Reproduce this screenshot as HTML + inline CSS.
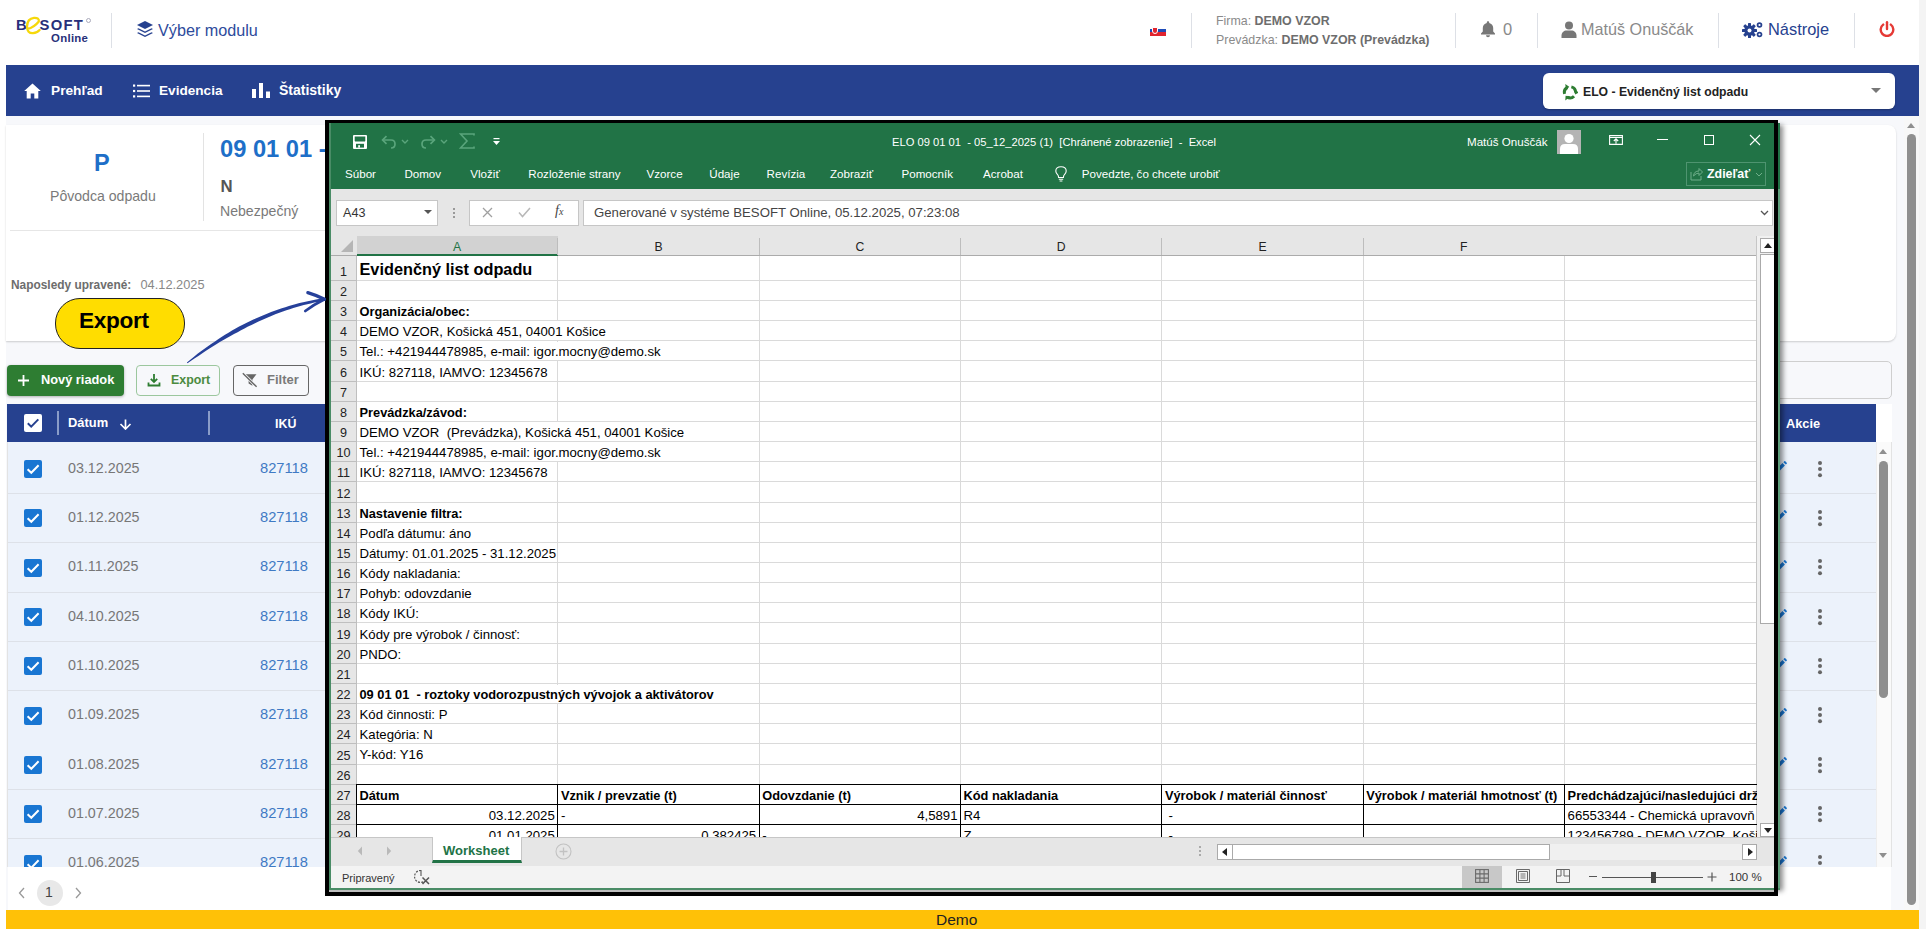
<!DOCTYPE html>
<html><head><meta charset="utf-8">
<style>
*{box-sizing:border-box;margin:0;padding:0}
html,body{width:1926px;height:929px;overflow:hidden;background:#fff;font-family:"Liberation Sans",sans-serif;position:relative}
.a{position:absolute}
.nw{white-space:nowrap}
.vdiv{position:absolute;width:1px;background:#dde0e6}
.navt{color:#fff;font-weight:700}
</style></head><body>
<!-- HEADER -->
<div class="a" style="left:0;top:0;width:1919px;height:65px;background:#fff"></div>
<!-- logo -->
<div class="a nw" style="left:16px;top:18px;font-weight:700;font-size:14.8px;color:#28307a;line-height:15px">B</div>
<div class="a nw" style="left:39.5px;top:18px;font-weight:700;font-size:14.8px;color:#28307a;line-height:15px;letter-spacing:1.3px">SOFT</div>
<svg class="a" style="left:24px;top:15px" width="18" height="21" viewBox="24 15 18 21">
<path d="M27.5 29 Q34 27.5 38.8 21.5 Q39.5 17.5 34 17.8 Q27.2 18.5 27 26.5 Q27.2 33.5 33 33.2 Q37 33 39.6 30" fill="none" stroke="#f6d80b" stroke-width="2.3" stroke-linecap="round"/>
</svg>
<div class="a" style="left:86px;top:18px;width:5px;height:5px;border:1px solid #aab;border-radius:50%"></div>
<div class="a nw" style="left:51px;top:32px;font-weight:700;font-size:11.4px;color:#28307a;line-height:12px;letter-spacing:0.3px">Online</div>
<div class="vdiv" style="left:111px;top:13px;height:35px"></div>
<!-- layers icon -->
<svg class="a" style="left:136px;top:20px" width="18" height="18" viewBox="0 0 18 18">
<path d="M9 1 L17 5 L9 9 L1 5 Z" fill="#26418f"/>
<path d="M2.5 8.2 L9 11.5 L15.5 8.2 L17 9 L9 13 L1 9 Z" fill="#26418f"/>
<path d="M2.5 12.2 L9 15.5 L15.5 12.2 L17 13 L9 17 L1 13 Z" fill="#26418f"/>
</svg>
<div class="a nw" style="left:158px;top:21px;font-size:16.2px;color:#2e4b9c;line-height:18px">Výber modulu</div>

<!-- flag -->
<div class="a" style="left:1150px;top:25px;width:16px;height:11px;background:linear-gradient(#fff 0 33%,#1e4bb8 33% 66%,#e0242f 66%)"></div>
<div class="a" style="left:1152px;top:27px;width:5.5px;height:7px;background:#e0242f;border:1px solid #fff;border-radius:0 0 3px 3px"></div>
<div class="vdiv" style="left:1191px;top:13px;height:35px"></div>
<div class="a nw" style="left:1216px;top:12px;font-size:12.4px;color:#8a8a8a;line-height:19px">Firma: <b style="color:#6d6d6d">DEMO VZOR</b><br>Prevádzka: <b style="color:#6d6d6d">DEMO VZOR (Prevádzka)</b></div>
<div class="vdiv" style="left:1455px;top:13px;height:35px"></div>
<!-- bell -->
<svg class="a" style="left:1480px;top:20px" width="16" height="18" viewBox="0 0 16 18">
<path d="M8 1.2c.7 0 1.2.5 1.2 1.1v.6c2.4.5 4 2.5 4 5v3.6l1.8 2v1H1v-1l1.8-2V7.9c0-2.5 1.6-4.5 4-5v-.6C6.8 1.7 7.300 1.200 8 1.200z" fill="#777"/>
<path d="M6 15.2h4a2 2 0 0 1-4 0z" fill="#777"/>
</svg>
<div class="a nw" style="left:1503px;top:20px;font-size:16.5px;color:#8a8a8a;line-height:18px">0</div>
<div class="vdiv" style="left:1537px;top:13px;height:35px"></div>
<!-- user -->
<svg class="a" style="left:1561px;top:21px" width="16" height="17" viewBox="0 0 16 17">
<circle cx="8" cy="4.5" r="4" fill="#777"/>
<path d="M0.5 17v-2.5c0-3 2.5-5 5-5h5c2.5 0 5 2 5 5V17z" fill="#777"/>
</svg>
<div class="a nw" style="left:1581px;top:20px;font-size:16.2px;color:#8a8a8a;line-height:18px">Matúš Onuščák</div>
<div class="vdiv" style="left:1718px;top:13px;height:35px"></div>
<!-- gears -->
<svg class="a" style="left:1742px;top:21px" width="22" height="17" viewBox="0 0 22 17">
<g fill="#26418f">
<circle cx="7.5" cy="9.5" r="5.2"/>
<rect x="6" y="2" width="3" height="15" rx="0.6"/>
<rect x="6" y="2" width="3" height="15" rx="0.6" transform="rotate(45 7.5 9.5)"/>
<rect x="6" y="2" width="3" height="15" rx="0.6" transform="rotate(90 7.5 9.5)"/>
<rect x="6" y="2" width="3" height="15" rx="0.6" transform="rotate(135 7.5 9.5)"/>
</g>
<circle cx="7.5" cy="9.5" r="2" fill="#fff"/>
<g fill="#26418f">
<circle cx="17.5" cy="4" r="2.8"/><circle cx="17.5" cy="13.5" r="2.8"/>
</g>
<circle cx="17.5" cy="4" r="1.1" fill="#fff"/><circle cx="17.5" cy="13.5" r="1.1" fill="#fff"/>
</svg>
<div class="a nw" style="left:1768px;top:20px;font-size:16.4px;color:#26418f;line-height:18px">Nástroje</div>
<div class="vdiv" style="left:1854px;top:13px;height:35px"></div>
<!-- power -->
<svg class="a" style="left:1879px;top:21px" width="16" height="16" viewBox="0 0 16 16">
<path d="M4.2 3.6A6.3 6.3 0 1 0 11.8 3.6" fill="none" stroke="#e53935" stroke-width="2.4" stroke-linecap="round"/>
<path d="M8 1.2V8" stroke="#e53935" stroke-width="2.4" stroke-linecap="round"/>
</svg>

<div id="rstrip" class="a" style="left:1919px;top:0;width:7px;height:929px;background:#f4f4f4"></div>

<!-- NAV -->
<div class="a" style="left:6px;top:65px;width:1913px;height:51px;background:#26418f"></div>
<svg class="a" style="left:24px;top:83px" width="17" height="16" viewBox="0 0 17 16">
<path d="M8.5 0.5 L16.8 8 H14.3 V15.5 H10.3 V10.5 H6.7 V15.5 H2.7 V8 H0.2 Z" fill="#fff"/>
</svg>
<div class="navt nw a" style="left:51px;top:83px;font-size:13.7px;line-height:16px">Prehľad</div>
<svg class="a" style="left:133px;top:84px" width="17" height="14" viewBox="0 0 17 14">
<g fill="#fff"><rect x="0" y="0.5" width="2.2" height="2.2"/><rect x="0" y="5.9" width="2.2" height="2.2"/><rect x="0" y="11.3" width="2.2" height="2.2"/>
<rect x="4" y="0.8" width="13" height="1.6"/><rect x="4" y="6.2" width="13" height="1.6"/><rect x="4" y="11.6" width="13" height="1.6"/></g>
</svg>
<div class="navt nw a" style="left:159px;top:83px;font-size:13.6px;line-height:16px">Evidencia</div>
<svg class="a" style="left:252px;top:83px" width="18" height="16" viewBox="0 0 18 16">
<g fill="#fff"><rect x="0" y="6" width="4" height="9"/><rect x="7" y="0" width="4" height="15"/><rect x="14" y="8.5" width="4" height="6.5"/></g>
</svg>
<div class="navt nw a" style="left:279px;top:81px;font-size:14px;line-height:18px">Štatistiky</div>
<!-- ELO select -->
<div class="a" style="left:1543px;top:73px;width:352px;height:36px;background:#fff;border-radius:6px;box-shadow:0 1px 2px rgba(0,0,0,.25)"></div>
<svg class="a" style="left:1562px;top:83.5px" width="16" height="17" viewBox="0 0 16 17"><path d="M9.35 2.87 A5.6 5.6 0 0 1 13.60 8.50" fill="none" stroke="#2e7d32" stroke-width="3"/><path d="M13.19 10.40 L17.51 8.26 L11.57 5.86Z" fill="#2e7d32"/><path d="M12.03 12.19 A5.6 5.6 0 0 1 5.03 13.05" fill="none" stroke="#2e7d32" stroke-width="3"/><path d="M3.59 11.75 L3.28 16.55 L8.33 12.61Z" fill="#2e7d32"/><path d="M2.62 9.84 A5.6 5.6 0 0 1 5.37 3.36" fill="none" stroke="#2e7d32" stroke-width="3"/><path d="M7.22 2.75 L3.21 0.09 L4.10 6.42Z" fill="#2e7d32"/></svg>
<div class="a nw" style="left:1583px;top:84.5px;font-size:12.2px;font-weight:700;color:#222;line-height:14px">ELO - Evidenčný list odpadu</div>
<div class="a" style="left:1871px;top:88px;width:0;height:0;border-left:5px solid transparent;border-right:5px solid transparent;border-top:5px solid #777"></div>

<!-- CONTENT -->
<div class="a" style="left:6px;top:116px;width:1913px;height:794px;background:#f7f8fb"></div>
<!-- card -->
<div class="a" style="left:6px;top:125px;width:1890px;height:216px;background:#fff;border-radius:0 8px 8px 0;box-shadow:0 1px 2px rgba(0,0,0,.18)"></div>
<div class="a nw" style="left:94px;top:150.5px;font-size:23.5px;font-weight:700;color:#1e6fc8;line-height:24px">P</div>
<div class="a nw" style="left:50px;top:188px;font-size:14.1px;color:#7a7a7a;line-height:16px">Pôvodca odpadu</div>
<div class="vdiv" style="left:203px;top:133px;height:88px;background:#e3e3e3"></div>
<div class="a nw" style="left:220px;top:136px;font-size:23.7px;font-weight:700;color:#1e6fc8;line-height:26px">09 01 01 - roztoky vodorozpustných vývojok a aktivátorov</div>
<div class="a nw" style="left:220.5px;top:178.5px;font-size:16.8px;font-weight:700;color:#555;line-height:16px">N</div>
<div class="a nw" style="left:220px;top:202.5px;font-size:14.1px;color:#7a7a7a;line-height:16px">Nebezpečný</div>
<div class="a" style="left:10px;top:230px;width:1000px;height:1px;background:#e6e6e6"></div>
<div class="a nw" style="left:11px;top:278px;font-size:11.9px;font-weight:700;color:#6d6d6d;line-height:14px">Naposledy upravené:</div><div class="a nw" style="left:140.5px;top:278px;font-size:12.8px;color:#888;line-height:14px">04.12.2025</div>

<!-- toolbar -->
<div class="a" style="left:7px;top:365px;width:117px;height:31px;background:#2e7d32;border-radius:4px;box-shadow:0 1px 3px rgba(0,0,0,.3)"></div>
<svg class="a" style="left:17px;top:374px" width="13" height="13" viewBox="0 0 13 13"><path d="M6.5 1V12M1 6.5H12" stroke="#fff" stroke-width="1.8"/></svg>
<div class="a nw" style="left:41px;top:373px;font-size:12.8px;font-weight:700;color:#fff;line-height:14px">Nový riadok</div>
<div class="a" style="left:136px;top:365px;width:84px;height:31px;border:1px solid #9cc79e;border-radius:4px;background:transparent"></div>
<svg class="a" style="left:147px;top:373px" width="14" height="14" viewBox="0 0 14 14"><path d="M7 1V9M3.8 5.8L7 9L10.2 5.8M1.5 9.5V12.5H12.5V9.5" fill="none" stroke="#2e7d32" stroke-width="1.8"/></svg>
<div class="a nw" style="left:171px;top:373px;font-size:12.4px;font-weight:700;color:#4c8b3f;line-height:14px">Export</div>
<div class="a" style="left:233px;top:365px;width:76px;height:31px;border:1px solid #666;border-radius:4px;background:transparent"></div>
<svg class="a" style="left:242px;top:372px" width="16" height="16" viewBox="0 0 16 16"><path d="M3.5 2.2H14.5L10.4 7.4V13.8L6.6 11.6V7.4Z" fill="#666"/><path d="M0.8 1.2L14.6 14.8" stroke="#f7f8fb" stroke-width="3"/><path d="M0.8 1.2L14.6 14.8" stroke="#666" stroke-width="1.4"/></svg>
<div class="a nw" style="left:267px;top:373px;font-size:13px;font-weight:700;color:#7a7a7a;line-height:14px">Filter</div>
<!-- right search box -->
<div class="a" style="left:1000px;top:361px;width:892px;height:38px;border:1px solid #cfcfcf;border-radius:5px;background:#f7f8fb"></div>

<!-- table -->
<div class="a" style="left:7px;top:404px;width:1885px;height:463px;background:#fff;border:1px solid #e3e3e3"></div>
<div class="a" style="left:7px;top:404px;width:1869px;height:38px;background:#26418f"></div>
<div class="a" style="left:1876px;top:404px;width:16px;height:38px;background:#fff"></div>
<div class="a" style="left:24px;top:414px;width:18px;height:18px;background:#fff;border-radius:2px"></div>
<svg class="a" style="left:24px;top:414px" width="18" height="18" viewBox="0 0 18 18"><path d="M3.8 9.3L7.2 12.6L14.3 5.4" fill="none" stroke="#26418f" stroke-width="2"/></svg>
<div class="a" style="left:57px;top:411px;width:2px;height:24px;background:#8a9cc8"></div>
<div class="a nw" style="left:68px;top:416px;font-size:12.9px;font-weight:700;color:#fff;line-height:14px">Dátum</div>
<svg class="a" style="left:119px;top:418.5px" width="13" height="11" viewBox="0 0 13 11"><path d="M6.5 0.5V10M1.5 5L6.5 10L11.5 5" fill="none" stroke="#fff" stroke-width="1.7"/></svg>
<div class="a" style="left:208px;top:411px;width:2px;height:24px;background:#8a9cc8"></div>
<div class="a nw" style="left:275px;top:417px;font-size:12.4px;font-weight:700;color:#fff;line-height:14px">IKÚ</div>
<div class="a nw" style="left:1786px;top:417px;font-size:12.8px;font-weight:700;color:#fff;line-height:14px">Akcie</div>
<div class="a" style="left:7px;top:442px;width:1869px;height:425px;overflow:hidden"><div style="position:relative;left:-7px;top:-442px"><div class="a" style="left:8px;top:442.0px;width:1868px;height:51.8px;background:#ecf2fb"></div>
<div class="a" style="left:8px;top:492.8px;width:1868px;height:1px;background:#dde1e8"></div>
<div class="a" style="left:24px;top:459.9px;width:18px;height:18px;background:#1976d2;border-radius:2px"></div>
<svg class="a" style="left:24px;top:459.9px" width="18" height="18" viewBox="0 0 18 18"><path d="M3.6 9.2L7.3 12.8L14.6 5.3" fill="none" stroke="#fff" stroke-width="2"/></svg>
<div class="a nw" style="left:68px;top:459.6px;font-size:14.3px;color:#777;line-height:16px">03.12.2025</div>
<div class="a nw" style="left:260px;top:459.6px;font-size:14.7px;color:#3f7ac4;line-height:16px">827118</div>
<svg class="a" style="left:1773px;top:461.1px" width="14" height="14" viewBox="0 0 14 14"><path d="M1 13L1.8 9.8L9.5 2.1L11.9 4.5L4.2 12.2Z" fill="#1976d2"/><path d="M10.4 1.2L11.3 0.3Q11.8 -0.2 12.3 0.3L13.7 1.7Q14.2 2.2 13.7 2.7L12.8 3.6Z" fill="#1976d2"/></svg>
<div class="a" style="left:1818px;top:460.6px;width:4px;height:4px;border-radius:50%;background:#666;box-shadow:0 6.1px 0 #666,0 12.2px 0 #666"></div>
<div class="a" style="left:8px;top:493.8px;width:1868px;height:49.3px;background:#ecf2fb"></div>
<div class="a" style="left:8px;top:542.1px;width:1868px;height:1px;background:#dde1e8"></div>
<div class="a" style="left:24px;top:509.2px;width:18px;height:18px;background:#1976d2;border-radius:2px"></div>
<svg class="a" style="left:24px;top:509.2px" width="18" height="18" viewBox="0 0 18 18"><path d="M3.6 9.2L7.3 12.8L14.6 5.3" fill="none" stroke="#fff" stroke-width="2"/></svg>
<div class="a nw" style="left:68px;top:508.9px;font-size:14.3px;color:#777;line-height:16px">01.12.2025</div>
<div class="a nw" style="left:260px;top:508.9px;font-size:14.7px;color:#3f7ac4;line-height:16px">827118</div>
<svg class="a" style="left:1773px;top:510.4px" width="14" height="14" viewBox="0 0 14 14"><path d="M1 13L1.8 9.8L9.5 2.1L11.9 4.5L4.2 12.2Z" fill="#1976d2"/><path d="M10.4 1.2L11.3 0.3Q11.8 -0.2 12.3 0.3L13.7 1.7Q14.2 2.2 13.7 2.7L12.8 3.6Z" fill="#1976d2"/></svg>
<div class="a" style="left:1818px;top:509.9px;width:4px;height:4px;border-radius:50%;background:#666;box-shadow:0 6.1px 0 #666,0 12.2px 0 #666"></div>
<div class="a" style="left:8px;top:543.1px;width:1868px;height:49.3px;background:#ecf2fb"></div>
<div class="a" style="left:8px;top:591.5px;width:1868px;height:1px;background:#dde1e8"></div>
<div class="a" style="left:24px;top:558.6px;width:18px;height:18px;background:#1976d2;border-radius:2px"></div>
<svg class="a" style="left:24px;top:558.6px" width="18" height="18" viewBox="0 0 18 18"><path d="M3.6 9.2L7.3 12.8L14.6 5.3" fill="none" stroke="#fff" stroke-width="2"/></svg>
<div class="a nw" style="left:68px;top:558.3px;font-size:14.3px;color:#777;line-height:16px">01.11.2025</div>
<div class="a nw" style="left:260px;top:558.3px;font-size:14.7px;color:#3f7ac4;line-height:16px">827118</div>
<svg class="a" style="left:1773px;top:559.8px" width="14" height="14" viewBox="0 0 14 14"><path d="M1 13L1.8 9.8L9.5 2.1L11.9 4.5L4.2 12.2Z" fill="#1976d2"/><path d="M10.4 1.2L11.3 0.3Q11.8 -0.2 12.3 0.3L13.7 1.7Q14.2 2.2 13.7 2.7L12.8 3.6Z" fill="#1976d2"/></svg>
<div class="a" style="left:1818px;top:559.3px;width:4px;height:4px;border-radius:50%;background:#666;box-shadow:0 6.1px 0 #666,0 12.2px 0 #666"></div>
<div class="a" style="left:8px;top:592.5px;width:1868px;height:49.3px;background:#ecf2fb"></div>
<div class="a" style="left:8px;top:640.8px;width:1868px;height:1px;background:#dde1e8"></div>
<div class="a" style="left:24px;top:607.9px;width:18px;height:18px;background:#1976d2;border-radius:2px"></div>
<svg class="a" style="left:24px;top:607.9px" width="18" height="18" viewBox="0 0 18 18"><path d="M3.6 9.2L7.3 12.8L14.6 5.3" fill="none" stroke="#fff" stroke-width="2"/></svg>
<div class="a nw" style="left:68px;top:607.6px;font-size:14.3px;color:#777;line-height:16px">04.10.2025</div>
<div class="a nw" style="left:260px;top:607.6px;font-size:14.7px;color:#3f7ac4;line-height:16px">827118</div>
<svg class="a" style="left:1773px;top:609.1px" width="14" height="14" viewBox="0 0 14 14"><path d="M1 13L1.8 9.8L9.5 2.1L11.9 4.5L4.2 12.2Z" fill="#1976d2"/><path d="M10.4 1.2L11.3 0.3Q11.8 -0.2 12.3 0.3L13.7 1.7Q14.2 2.2 13.7 2.7L12.8 3.6Z" fill="#1976d2"/></svg>
<div class="a" style="left:1818px;top:608.6px;width:4px;height:4px;border-radius:50%;background:#666;box-shadow:0 6.1px 0 #666,0 12.2px 0 #666"></div>
<div class="a" style="left:8px;top:641.8px;width:1868px;height:49.3px;background:#ecf2fb"></div>
<div class="a" style="left:8px;top:690.1px;width:1868px;height:1px;background:#dde1e8"></div>
<div class="a" style="left:24px;top:657.2px;width:18px;height:18px;background:#1976d2;border-radius:2px"></div>
<svg class="a" style="left:24px;top:657.2px" width="18" height="18" viewBox="0 0 18 18"><path d="M3.6 9.2L7.3 12.8L14.6 5.3" fill="none" stroke="#fff" stroke-width="2"/></svg>
<div class="a nw" style="left:68px;top:656.9px;font-size:14.3px;color:#777;line-height:16px">01.10.2025</div>
<div class="a nw" style="left:260px;top:656.9px;font-size:14.7px;color:#3f7ac4;line-height:16px">827118</div>
<svg class="a" style="left:1773px;top:658.4px" width="14" height="14" viewBox="0 0 14 14"><path d="M1 13L1.8 9.8L9.5 2.1L11.9 4.5L4.2 12.2Z" fill="#1976d2"/><path d="M10.4 1.2L11.3 0.3Q11.8 -0.2 12.3 0.3L13.7 1.7Q14.2 2.2 13.7 2.7L12.8 3.6Z" fill="#1976d2"/></svg>
<div class="a" style="left:1818px;top:657.9px;width:4px;height:4px;border-radius:50%;background:#666;box-shadow:0 6.1px 0 #666,0 12.2px 0 #666"></div>
<div class="a" style="left:8px;top:691.1px;width:1868px;height:49.3px;background:#ecf2fb"></div>
<div class="a" style="left:8px;top:739.5px;width:1868px;height:1px;background:#dde1e8"></div>
<div class="a" style="left:24px;top:706.6px;width:18px;height:18px;background:#1976d2;border-radius:2px"></div>
<svg class="a" style="left:24px;top:706.6px" width="18" height="18" viewBox="0 0 18 18"><path d="M3.6 9.2L7.3 12.8L14.6 5.3" fill="none" stroke="#fff" stroke-width="2"/></svg>
<div class="a nw" style="left:68px;top:706.2px;font-size:14.3px;color:#777;line-height:16px">01.09.2025</div>
<div class="a nw" style="left:260px;top:706.2px;font-size:14.7px;color:#3f7ac4;line-height:16px">827118</div>
<svg class="a" style="left:1773px;top:707.8px" width="14" height="14" viewBox="0 0 14 14"><path d="M1 13L1.8 9.8L9.5 2.1L11.9 4.5L4.2 12.2Z" fill="#1976d2"/><path d="M10.4 1.2L11.3 0.3Q11.8 -0.2 12.3 0.3L13.7 1.7Q14.2 2.2 13.7 2.7L12.8 3.6Z" fill="#1976d2"/></svg>
<div class="a" style="left:1818px;top:707.3px;width:4px;height:4px;border-radius:50%;background:#666;box-shadow:0 6.1px 0 #666,0 12.2px 0 #666"></div>
<div class="a" style="left:8px;top:740.4px;width:1868px;height:49.3px;background:#ecf2fb"></div>
<div class="a" style="left:8px;top:788.8px;width:1868px;height:1px;background:#dde1e8"></div>
<div class="a" style="left:24px;top:755.9px;width:18px;height:18px;background:#1976d2;border-radius:2px"></div>
<svg class="a" style="left:24px;top:755.9px" width="18" height="18" viewBox="0 0 18 18"><path d="M3.6 9.2L7.3 12.8L14.6 5.3" fill="none" stroke="#fff" stroke-width="2"/></svg>
<div class="a nw" style="left:68px;top:755.6px;font-size:14.3px;color:#777;line-height:16px">01.08.2025</div>
<div class="a nw" style="left:260px;top:755.6px;font-size:14.7px;color:#3f7ac4;line-height:16px">827118</div>
<svg class="a" style="left:1773px;top:757.1px" width="14" height="14" viewBox="0 0 14 14"><path d="M1 13L1.8 9.8L9.5 2.1L11.9 4.5L4.2 12.2Z" fill="#1976d2"/><path d="M10.4 1.2L11.3 0.3Q11.8 -0.2 12.3 0.3L13.7 1.7Q14.2 2.2 13.7 2.7L12.8 3.6Z" fill="#1976d2"/></svg>
<div class="a" style="left:1818px;top:756.6px;width:4px;height:4px;border-radius:50%;background:#666;box-shadow:0 6.1px 0 #666,0 12.2px 0 #666"></div>
<div class="a" style="left:8px;top:789.8px;width:1868px;height:49.3px;background:#ecf2fb"></div>
<div class="a" style="left:8px;top:838.1px;width:1868px;height:1px;background:#dde1e8"></div>
<div class="a" style="left:24px;top:805.2px;width:18px;height:18px;background:#1976d2;border-radius:2px"></div>
<svg class="a" style="left:24px;top:805.2px" width="18" height="18" viewBox="0 0 18 18"><path d="M3.6 9.2L7.3 12.8L14.6 5.3" fill="none" stroke="#fff" stroke-width="2"/></svg>
<div class="a nw" style="left:68px;top:804.9px;font-size:14.3px;color:#777;line-height:16px">01.07.2025</div>
<div class="a nw" style="left:260px;top:804.9px;font-size:14.7px;color:#3f7ac4;line-height:16px">827118</div>
<svg class="a" style="left:1773px;top:806.4px" width="14" height="14" viewBox="0 0 14 14"><path d="M1 13L1.8 9.8L9.5 2.1L11.9 4.5L4.2 12.2Z" fill="#1976d2"/><path d="M10.4 1.2L11.3 0.3Q11.8 -0.2 12.3 0.3L13.7 1.7Q14.2 2.2 13.7 2.7L12.8 3.6Z" fill="#1976d2"/></svg>
<div class="a" style="left:1818px;top:805.9px;width:4px;height:4px;border-radius:50%;background:#666;box-shadow:0 6.1px 0 #666,0 12.2px 0 #666"></div>
<div class="a" style="left:8px;top:839.1px;width:1868px;height:49.3px;background:#ecf2fb"></div>
<div class="a" style="left:8px;top:887.4px;width:1868px;height:1px;background:#dde1e8"></div>
<div class="a" style="left:24px;top:854.5px;width:18px;height:18px;background:#1976d2;border-radius:2px"></div>
<svg class="a" style="left:24px;top:854.5px" width="18" height="18" viewBox="0 0 18 18"><path d="M3.6 9.2L7.3 12.8L14.6 5.3" fill="none" stroke="#fff" stroke-width="2"/></svg>
<div class="a nw" style="left:68px;top:854.2px;font-size:14.3px;color:#777;line-height:16px">01.06.2025</div>
<div class="a nw" style="left:260px;top:854.2px;font-size:14.7px;color:#3f7ac4;line-height:16px">827118</div>
<svg class="a" style="left:1773px;top:855.7px" width="14" height="14" viewBox="0 0 14 14"><path d="M1 13L1.8 9.8L9.5 2.1L11.9 4.5L4.2 12.2Z" fill="#1976d2"/><path d="M10.4 1.2L11.3 0.3Q11.8 -0.2 12.3 0.3L13.7 1.7Q14.2 2.2 13.7 2.7L12.8 3.6Z" fill="#1976d2"/></svg>
<div class="a" style="left:1818px;top:855.2px;width:4px;height:4px;border-radius:50%;background:#666;box-shadow:0 6.1px 0 #666,0 12.2px 0 #666"></div></div></div>
<!-- table scrollbar -->
<div class="a" style="left:1876px;top:442px;width:15px;height:425px;background:#fafafa;border-left:1px solid #eee"></div>
<div class="a" style="left:1879px;top:449px;width:0;height:0;border-left:4.5px solid transparent;border-right:4.5px solid transparent;border-bottom:5px solid #8f8f8f"></div>
<div class="a" style="left:1879px;top:461px;width:9px;height:237px;background:#8f8f8f;border-radius:5px"></div>
<div class="a" style="left:1879px;top:853px;width:0;height:0;border-left:4.5px solid transparent;border-right:4.5px solid transparent;border-top:5px solid #8f8f8f"></div>
<!-- pagination -->
<div class="a" style="left:8px;top:867px;width:1883px;height:43px;background:#fff"></div>
<svg class="a" style="left:18px;top:887px" width="8" height="12" viewBox="0 0 8 12"><path d="M6 1L1.5 6L6 11" fill="none" stroke="#999" stroke-width="1.3"/></svg>
<div class="a" style="left:37px;top:880px;width:26px;height:26px;border-radius:50%;background:#e8e8e8"></div>
<div class="a nw" style="left:45px;top:885px;font-size:14px;color:#444;line-height:14px">1</div>
<svg class="a" style="left:74px;top:887px" width="8" height="12" viewBox="0 0 8 12"><path d="M2 1L6.5 6L2 11" fill="none" stroke="#999" stroke-width="1.3"/></svg>
<!-- page scrollbar -->
<div class="a" style="left:1904px;top:116px;width:15px;height:794px;background:#f8f8f8"></div>
<div class="a" style="left:1907px;top:123px;width:0;height:0;border-left:4.5px solid transparent;border-right:4.5px solid transparent;border-bottom:5px solid #8f8f8f"></div>
<div class="a" style="left:1907px;top:134px;width:9px;height:771px;background:#8f8f8f;border-radius:5px"></div>
<!-- demo bar -->
<div class="a" style="left:6px;top:910px;width:1913px;height:19px;background:#ffc107"></div>
<div class="a nw" style="left:936px;top:912px;font-size:15.5px;color:#222;line-height:16px">Demo</div>

<div class="a" style="left:329px;top:123px;width:1451px;height:766px;box-shadow:3px 2px 5px rgba(0,0,0,.45);background:#5f9f7c"></div>
<div class="a" style="left:329px;top:123px;width:1451px;height:66px;background:#217346"></div>
<div class="a" style="left:329px;top:189px;width:1449px;height:47px;background:#e6e6e6;border-left:1.5px solid #4a8c66"></div>
<svg class="a" style="left:352px;top:134px" width="16" height="16" viewBox="0 0 16 16">
<rect x="1" y="1" width="14" height="14" rx="1" fill="#fff"/>
<path d="M2.7 2.5H13.3V6.4Q13.3 7.6 12.1 7.6H3.9Q2.7 7.6 2.7 6.4Z" fill="#217346"/>
<rect x="4" y="9.8" width="8" height="3.8" fill="#217346"/>
<rect x="6.2" y="11.2" width="1.8" height="2.4" fill="#fff"/>
</svg>
<svg class="a" style="left:381px;top:134px" width="16" height="16" viewBox="0 0 16 16">
<path d="M2 6H10Q14 6 14 10Q14 14 10 14" fill="none" stroke="#5aa57c" stroke-width="1.7"/>
<path d="M5.5 2.2L1.6 6L5.5 9.8" fill="none" stroke="#5aa57c" stroke-width="1.7"/>
</svg>
<svg class="a" style="left:401px;top:139px" width="8" height="5" viewBox="0 0 8 5"><path d="M1 1L4 4L7 1" fill="none" stroke="#5aa57c" stroke-width="1.4"/></svg>
<svg class="a" style="left:420px;top:134px" width="16" height="16" viewBox="0 0 16 16">
<path d="M14 6H6Q2 6 2 10Q2 14 6 14" fill="none" stroke="#5aa57c" stroke-width="1.7"/>
<path d="M10.5 2.2L14.4 6L10.5 9.8" fill="none" stroke="#5aa57c" stroke-width="1.7"/>
</svg>
<svg class="a" style="left:440px;top:139px" width="8" height="5" viewBox="0 0 8 5"><path d="M1 1L4 4L7 1" fill="none" stroke="#5aa57c" stroke-width="1.4"/></svg>
<svg class="a" style="left:459px;top:133px" width="16" height="16" viewBox="0 0 16 16"><path d="M15 2.5V1H1.5L8 8L1.5 15H15V13.5" fill="none" stroke="#5aa57c" stroke-width="1.6"/></svg>
<svg class="a" style="left:493px;top:138px" width="7" height="8" viewBox="0 0 7 8"><rect x="0.5" y="0" width="6" height="1.2" fill="#fff"/><path d="M0 3H7L3.5 7Z" fill="#fff"/></svg>
<div class="a nw" style="left:892px;top:135px;font-size:11.2px;color:#fff;line-height:14px">ELO 09 01 01&nbsp; - 05_12_2025 (1)&nbsp; [Chránené zobrazenie]&nbsp; -&nbsp; Excel</div>
<div class="a nw" style="left:1467px;top:135px;font-size:11.6px;color:#fff;line-height:14px">Matúš Onuščák</div>
<svg class="a" style="left:1557px;top:130px" width="24" height="24" viewBox="0 0 24 24">
<rect width="24" height="24" fill="#b4b4b4"/><circle cx="12" cy="8.5" r="4.6" fill="#fff"/><path d="M3 24V19Q3 14 8 14H16Q21 14 21 19V24Z" fill="#fff"/>
</svg>
<svg class="a" style="left:1609px;top:135px" width="14" height="10" viewBox="0 0 14 10">
<path d="M0.6 0.6H13.4V9.4H0.6Z" fill="none" stroke="#fff" stroke-width="1.1"/><path d="M0.6 2.5H13.4" stroke="#fff" stroke-width="1"/>
<path d="M7 8.8V4M4.8 6L7 3.8L9.2 6" fill="none" stroke="#fff" stroke-width="1.1"/>
</svg>
<div class="a" style="left:1657px;top:139px;width:11px;height:1px;background:#fff"></div>
<div class="a" style="left:1704px;top:135px;width:10px;height:10px;border:1px solid #fff"></div>
<svg class="a" style="left:1749px;top:134px" width="12" height="12" viewBox="0 0 12 12"><path d="M1 1L11 11M11 1L1 11" stroke="#fff" stroke-width="1.1"/></svg>
<div class="a nw" style="left:345px;top:167px;font-size:11.6px;color:#fff;line-height:14px">Súbor</div>
<div class="a nw" style="left:404.4px;top:167px;font-size:11.6px;color:#fff;line-height:14px">Domov</div>
<div class="a nw" style="left:470.3px;top:167px;font-size:11.6px;color:#fff;line-height:14px">Vložiť</div>
<div class="a nw" style="left:528.3px;top:167px;font-size:11.6px;color:#fff;line-height:14px">Rozloženie strany</div>
<div class="a nw" style="left:646.5px;top:167px;font-size:11.6px;color:#fff;line-height:14px">Vzorce</div>
<div class="a nw" style="left:709.3px;top:167px;font-size:11.6px;color:#fff;line-height:14px">Údaje</div>
<div class="a nw" style="left:766.6px;top:167px;font-size:11.6px;color:#fff;line-height:14px">Revízia</div>
<div class="a nw" style="left:830px;top:167px;font-size:11.6px;color:#fff;line-height:14px">Zobraziť</div>
<div class="a nw" style="left:901.5px;top:167px;font-size:11.6px;color:#fff;line-height:14px">Pomocník</div>
<div class="a nw" style="left:983px;top:167px;font-size:11.6px;color:#fff;line-height:14px">Acrobat</div>
<div class="a nw" style="left:1081.8px;top:167px;font-size:11.6px;color:#fff;line-height:14px">Povedzte, čo chcete urobiť</div>
<svg class="a" style="left:1055px;top:166px" width="12" height="16" viewBox="0 0 12 16">
<path d="M3.6 11.5Q3.6 9.6 2.2 8.2Q0.8 6.6 0.8 5Q0.8 0.8 6 0.8Q11.2 0.8 11.2 5Q11.2 6.6 9.8 8.2Q8.4 9.6 8.4 11.5Z" fill="none" stroke="#fff" stroke-width="1.1"/>
<path d="M3.8 13.2H8.2M4.6 15H7.4" stroke="#fff" stroke-width="1.1"/>
</svg>
<div class="a" style="left:1686px;top:162px;width:80px;height:24px;border:1px solid #4f9470"></div>
<svg class="a" style="left:1690px;top:166px" width="13" height="15" viewBox="0 0 13 15">
<path d="M1 6V14H11V10" fill="none" stroke="#6fae8a" stroke-width="1"/><path d="M3.5 10Q4 5 9 5V2.5L12.5 6L9 9.5V7Q6 7 3.5 10Z" fill="none" stroke="#6fae8a" stroke-width="1"/>
</svg>
<div class="a nw" style="left:1707px;top:167px;font-size:12.4px;font-weight:700;color:#fff;line-height:14px">Zdieľať</div>
<svg class="a" style="left:1755px;top:172px" width="8" height="5" viewBox="0 0 8 5"><path d="M1 1L4 4L7 1" fill="none" stroke="#6fae8a" stroke-width="1"/></svg>
<div class="a" style="left:336px;top:200px;width:102px;height:26px;background:#fff;border:1px solid #c6c6c6"></div>
<div class="a nw" style="left:343px;top:206px;font-size:12.6px;color:#333;line-height:14px">A43</div>
<div class="a" style="left:424px;top:210px;width:0;height:0;border-left:4px solid transparent;border-right:4px solid transparent;border-top:4.5px solid #555"></div>
<div class="a" style="left:453px;top:208px;width:2px;height:2px;background:#999;box-shadow:0 4px 0 #999,0 8px 0 #999"></div>
<div class="a" style="left:469px;top:200px;width:110px;height:26px;background:#fff;border:1px solid #c6c6c6"></div>
<svg class="a" style="left:482px;top:207px" width="11" height="11" viewBox="0 0 11 11"><path d="M1 1L10 10M10 1L1 10" stroke="#a0a0a0" stroke-width="1.3"/></svg>
<svg class="a" style="left:518px;top:207px" width="13" height="11" viewBox="0 0 13 11"><path d="M1 5.5L4.5 9.5L12 1" fill="none" stroke="#b8b8b8" stroke-width="1.5"/></svg>
<div class="a nw" style="left:555px;top:203px;font-size:14px;font-style:italic;font-family:'Liberation Serif',serif;color:#444;line-height:16px">f<span style="font-size:10px">x</span></div>
<div class="a" style="left:583px;top:200px;width:1190px;height:26px;background:#fff;border:1px solid #c6c6c6"></div>
<div class="a nw" style="left:594px;top:205px;font-size:13.2px;color:#444;line-height:16px">Generované v systéme BESOFT Online, 05.12.2025, 07:23:08</div>
<svg class="a" style="left:1760px;top:210px" width="9" height="6" viewBox="0 0 9 6"><path d="M1 1L4.5 4.5L8 1" fill="none" stroke="#555" stroke-width="1.3"/></svg>
<div class="a" style="left:329px;top:236px;width:1445px;height:601px;background:#fff"></div>
<div class="a" style="left:331px;top:236px;width:1426px;height:19.5px;background:#e6e6e6;border-bottom:1px solid #ababab"></div>
<div class="a" style="left:331px;top:255.5px;width:25.5px;height:582px;background:#e6e6e6;border-right:1px solid #bfbfbf"></div>
<svg class="a" style="left:341px;top:240px" width="12" height="12" viewBox="0 0 12 12"><path d="M12 0V12H0Z" fill="#b5b5b5"/></svg>
<div class="a" style="left:356.5px;top:236px;width:201px;height:19.5px;background:#d2d2d2;border-bottom:2px solid #217346"></div>
<div class="a" style="left:356.5px;top:240px;width:201.3px;text-align:center;font-size:12.2px;color:#217346;line-height:14px">A</div>
<div class="a" style="left:557.9px;top:240px;width:201.3px;text-align:center;font-size:12.2px;color:#222;line-height:14px">B</div>
<div class="a" style="left:557.4px;top:238px;width:1px;height:17px;background:#bdbdbd"></div>
<div class="a" style="left:759.2px;top:240px;width:201.3px;text-align:center;font-size:12.2px;color:#222;line-height:14px">C</div>
<div class="a" style="left:758.7px;top:238px;width:1px;height:17px;background:#bdbdbd"></div>
<div class="a" style="left:960.5px;top:240px;width:201.3px;text-align:center;font-size:12.2px;color:#222;line-height:14px">D</div>
<div class="a" style="left:960.0px;top:238px;width:1px;height:17px;background:#bdbdbd"></div>
<div class="a" style="left:1161.9px;top:240px;width:201.3px;text-align:center;font-size:12.2px;color:#222;line-height:14px">E</div>
<div class="a" style="left:1161.4px;top:238px;width:1px;height:17px;background:#bdbdbd"></div>
<div class="a" style="left:1363.2px;top:240px;width:201.3px;text-align:center;font-size:12.2px;color:#222;line-height:14px">F</div>
<div class="a" style="left:1362.8px;top:238px;width:1px;height:17px;background:#bdbdbd"></div>
<div class="a" style="left:557.4px;top:255.5px;width:1px;height:582px;background:#dadada"></div>
<div class="a" style="left:758.7px;top:255.5px;width:1px;height:582px;background:#dadada"></div>
<div class="a" style="left:960.0px;top:255.5px;width:1px;height:582px;background:#dadada"></div>
<div class="a" style="left:1161.4px;top:255.5px;width:1px;height:582px;background:#dadada"></div>
<div class="a" style="left:1362.8px;top:255.5px;width:1px;height:582px;background:#dadada"></div>
<div class="a" style="left:1564.1px;top:255.5px;width:1px;height:582px;background:#dadada"></div>
<div class="a" style="left:331px;top:279.8px;width:25.5px;height:1px;background:#bfbfbf"></div>
<div class="a" style="left:356.5px;top:279.8px;width:1400px;height:1px;background:#dadada"></div>
<div class="a" style="left:331px;top:300.0px;width:25.5px;height:1px;background:#bfbfbf"></div>
<div class="a" style="left:356.5px;top:300.0px;width:1400px;height:1px;background:#dadada"></div>
<div class="a" style="left:331px;top:320.1px;width:25.5px;height:1px;background:#bfbfbf"></div>
<div class="a" style="left:356.5px;top:320.1px;width:1400px;height:1px;background:#dadada"></div>
<div class="a" style="left:331px;top:340.3px;width:25.5px;height:1px;background:#bfbfbf"></div>
<div class="a" style="left:356.5px;top:340.3px;width:1400px;height:1px;background:#dadada"></div>
<div class="a" style="left:331px;top:360.4px;width:25.5px;height:1px;background:#bfbfbf"></div>
<div class="a" style="left:356.5px;top:360.4px;width:1400px;height:1px;background:#dadada"></div>
<div class="a" style="left:331px;top:380.6px;width:25.5px;height:1px;background:#bfbfbf"></div>
<div class="a" style="left:356.5px;top:380.6px;width:1400px;height:1px;background:#dadada"></div>
<div class="a" style="left:331px;top:400.7px;width:25.5px;height:1px;background:#bfbfbf"></div>
<div class="a" style="left:356.5px;top:400.7px;width:1400px;height:1px;background:#dadada"></div>
<div class="a" style="left:331px;top:420.9px;width:25.5px;height:1px;background:#bfbfbf"></div>
<div class="a" style="left:356.5px;top:420.9px;width:1400px;height:1px;background:#dadada"></div>
<div class="a" style="left:331px;top:441.0px;width:25.5px;height:1px;background:#bfbfbf"></div>
<div class="a" style="left:356.5px;top:441.0px;width:1400px;height:1px;background:#dadada"></div>
<div class="a" style="left:331px;top:461.2px;width:25.5px;height:1px;background:#bfbfbf"></div>
<div class="a" style="left:356.5px;top:461.2px;width:1400px;height:1px;background:#dadada"></div>
<div class="a" style="left:331px;top:481.3px;width:25.5px;height:1px;background:#bfbfbf"></div>
<div class="a" style="left:356.5px;top:481.3px;width:1400px;height:1px;background:#dadada"></div>
<div class="a" style="left:331px;top:501.5px;width:25.5px;height:1px;background:#bfbfbf"></div>
<div class="a" style="left:356.5px;top:501.5px;width:1400px;height:1px;background:#dadada"></div>
<div class="a" style="left:331px;top:521.6px;width:25.5px;height:1px;background:#bfbfbf"></div>
<div class="a" style="left:356.5px;top:521.6px;width:1400px;height:1px;background:#dadada"></div>
<div class="a" style="left:331px;top:541.8px;width:25.5px;height:1px;background:#bfbfbf"></div>
<div class="a" style="left:356.5px;top:541.8px;width:1400px;height:1px;background:#dadada"></div>
<div class="a" style="left:331px;top:562.0px;width:25.5px;height:1px;background:#bfbfbf"></div>
<div class="a" style="left:356.5px;top:562.0px;width:1400px;height:1px;background:#dadada"></div>
<div class="a" style="left:331px;top:582.1px;width:25.5px;height:1px;background:#bfbfbf"></div>
<div class="a" style="left:356.5px;top:582.1px;width:1400px;height:1px;background:#dadada"></div>
<div class="a" style="left:331px;top:602.3px;width:25.5px;height:1px;background:#bfbfbf"></div>
<div class="a" style="left:356.5px;top:602.3px;width:1400px;height:1px;background:#dadada"></div>
<div class="a" style="left:331px;top:622.4px;width:25.5px;height:1px;background:#bfbfbf"></div>
<div class="a" style="left:356.5px;top:622.4px;width:1400px;height:1px;background:#dadada"></div>
<div class="a" style="left:331px;top:642.6px;width:25.5px;height:1px;background:#bfbfbf"></div>
<div class="a" style="left:356.5px;top:642.6px;width:1400px;height:1px;background:#dadada"></div>
<div class="a" style="left:331px;top:662.7px;width:25.5px;height:1px;background:#bfbfbf"></div>
<div class="a" style="left:356.5px;top:662.7px;width:1400px;height:1px;background:#dadada"></div>
<div class="a" style="left:331px;top:682.9px;width:25.5px;height:1px;background:#bfbfbf"></div>
<div class="a" style="left:356.5px;top:682.9px;width:1400px;height:1px;background:#dadada"></div>
<div class="a" style="left:331px;top:703.0px;width:25.5px;height:1px;background:#bfbfbf"></div>
<div class="a" style="left:356.5px;top:703.0px;width:1400px;height:1px;background:#dadada"></div>
<div class="a" style="left:331px;top:723.2px;width:25.5px;height:1px;background:#bfbfbf"></div>
<div class="a" style="left:356.5px;top:723.2px;width:1400px;height:1px;background:#dadada"></div>
<div class="a" style="left:331px;top:743.3px;width:25.5px;height:1px;background:#bfbfbf"></div>
<div class="a" style="left:356.5px;top:743.3px;width:1400px;height:1px;background:#dadada"></div>
<div class="a" style="left:331px;top:763.5px;width:25.5px;height:1px;background:#bfbfbf"></div>
<div class="a" style="left:356.5px;top:763.5px;width:1400px;height:1px;background:#dadada"></div>
<div class="a" style="left:331px;top:783.7px;width:25.5px;height:1px;background:#bfbfbf"></div>
<div class="a" style="left:356.5px;top:783.7px;width:1400px;height:1px;background:#dadada"></div>
<div class="a" style="left:331px;top:803.8px;width:25.5px;height:1px;background:#bfbfbf"></div>
<div class="a" style="left:356.5px;top:803.8px;width:1400px;height:1px;background:#dadada"></div>
<div class="a" style="left:331px;top:824.0px;width:25.5px;height:1px;background:#bfbfbf"></div>
<div class="a" style="left:356.5px;top:824.0px;width:1400px;height:1px;background:#dadada"></div>
<div class="a" style="left:331px;top:844.1px;width:25.5px;height:1px;background:#bfbfbf"></div>
<div class="a" style="left:356.5px;top:844.1px;width:1400px;height:1px;background:#dadada"></div>
<div class="a" style="left:1756px;top:236px;width:1px;height:601px;background:#c6c6c6"></div>
<div class="a" style="left:331px;top:263.8px;width:25px;text-align:center;font-size:12.6px;color:#222;line-height:16px">1</div>
<div class="a" style="left:331px;top:284.0px;width:25px;text-align:center;font-size:12.6px;color:#222;line-height:16px">2</div>
<div class="a" style="left:331px;top:304.1px;width:25px;text-align:center;font-size:12.6px;color:#222;line-height:16px">3</div>
<div class="a" style="left:331px;top:324.3px;width:25px;text-align:center;font-size:12.6px;color:#222;line-height:16px">4</div>
<div class="a" style="left:331px;top:344.4px;width:25px;text-align:center;font-size:12.6px;color:#222;line-height:16px">5</div>
<div class="a" style="left:331px;top:364.6px;width:25px;text-align:center;font-size:12.6px;color:#222;line-height:16px">6</div>
<div class="a" style="left:331px;top:384.7px;width:25px;text-align:center;font-size:12.6px;color:#222;line-height:16px">7</div>
<div class="a" style="left:331px;top:404.9px;width:25px;text-align:center;font-size:12.6px;color:#222;line-height:16px">8</div>
<div class="a" style="left:331px;top:425.0px;width:25px;text-align:center;font-size:12.6px;color:#222;line-height:16px">9</div>
<div class="a" style="left:331px;top:445.2px;width:25px;text-align:center;font-size:12.6px;color:#222;line-height:16px">10</div>
<div class="a" style="left:331px;top:465.3px;width:25px;text-align:center;font-size:12.6px;color:#222;line-height:16px">11</div>
<div class="a" style="left:331px;top:485.5px;width:25px;text-align:center;font-size:12.6px;color:#222;line-height:16px">12</div>
<div class="a" style="left:331px;top:505.6px;width:25px;text-align:center;font-size:12.6px;color:#222;line-height:16px">13</div>
<div class="a" style="left:331px;top:525.8px;width:25px;text-align:center;font-size:12.6px;color:#222;line-height:16px">14</div>
<div class="a" style="left:331px;top:546.0px;width:25px;text-align:center;font-size:12.6px;color:#222;line-height:16px">15</div>
<div class="a" style="left:331px;top:566.1px;width:25px;text-align:center;font-size:12.6px;color:#222;line-height:16px">16</div>
<div class="a" style="left:331px;top:586.3px;width:25px;text-align:center;font-size:12.6px;color:#222;line-height:16px">17</div>
<div class="a" style="left:331px;top:606.4px;width:25px;text-align:center;font-size:12.6px;color:#222;line-height:16px">18</div>
<div class="a" style="left:331px;top:626.6px;width:25px;text-align:center;font-size:12.6px;color:#222;line-height:16px">19</div>
<div class="a" style="left:331px;top:646.7px;width:25px;text-align:center;font-size:12.6px;color:#222;line-height:16px">20</div>
<div class="a" style="left:331px;top:666.9px;width:25px;text-align:center;font-size:12.6px;color:#222;line-height:16px">21</div>
<div class="a" style="left:331px;top:687.0px;width:25px;text-align:center;font-size:12.6px;color:#222;line-height:16px">22</div>
<div class="a" style="left:331px;top:707.2px;width:25px;text-align:center;font-size:12.6px;color:#222;line-height:16px">23</div>
<div class="a" style="left:331px;top:727.3px;width:25px;text-align:center;font-size:12.6px;color:#222;line-height:16px">24</div>
<div class="a" style="left:331px;top:747.5px;width:25px;text-align:center;font-size:12.6px;color:#222;line-height:16px">25</div>
<div class="a" style="left:331px;top:767.7px;width:25px;text-align:center;font-size:12.6px;color:#222;line-height:16px">26</div>
<div class="a" style="left:331px;top:787.8px;width:25px;text-align:center;font-size:12.6px;color:#222;line-height:16px">27</div>
<div class="a" style="left:331px;top:808.0px;width:25px;text-align:center;font-size:12.6px;color:#222;line-height:16px">28</div>
<div class="a" style="left:331px;top:828.1px;width:25px;text-align:center;font-size:12.6px;color:#222;line-height:16px">29</div>
<div class="a nw" style="left:359.5px;top:258.00px;padding:3.85px 0 0.8px 0;font-size:16.3px;font-weight:700;color:#000;line-height:14px;background:#fff">Evidenčný list odpadu</div>
<div class="a nw" style="left:359.5px;top:301.64px;padding:3.85px 0 0.8px 0;font-size:12.8px;font-weight:700;color:#000;line-height:14px;background:#fff">Organizácia/obec:</div>
<div class="a nw" style="left:359.5px;top:321.41px;padding:3.85px 0 0.8px 0;font-size:13.2px;color:#000;line-height:14px;background:#fff">DEMO VZOR, Košická 451, 04001 Košice</div>
<div class="a nw" style="left:359.5px;top:341.57px;padding:3.85px 0 0.8px 0;font-size:13.2px;color:#000;line-height:14px;background:#fff">Tel.: +421944478985, e-mail: igor.mocny@demo.sk</div>
<div class="a nw" style="left:359.5px;top:361.72px;padding:3.85px 0 0.8px 0;font-size:13.2px;color:#000;line-height:14px;background:#fff">IKÚ: 827118, IAMVO: 12345678</div>
<div class="a nw" style="left:359.5px;top:402.41px;padding:3.85px 0 0.8px 0;font-size:12.8px;font-weight:700;color:#000;line-height:14px;background:#fff">Prevádzka/závod:</div>
<div class="a nw" style="left:359.5px;top:422.18px;padding:3.85px 0 0.8px 0;font-size:13.2px;color:#000;line-height:14px;background:#fff">DEMO VZOR&nbsp; (Prevádzka), Košická 451, 04001 Košice</div>
<div class="a nw" style="left:359.5px;top:442.34px;padding:3.85px 0 0.8px 0;font-size:13.2px;color:#000;line-height:14px;background:#fff">Tel.: +421944478985, e-mail: igor.mocny@demo.sk</div>
<div class="a nw" style="left:359.5px;top:462.49px;padding:3.85px 0 0.8px 0;font-size:13.2px;color:#000;line-height:14px;background:#fff">IKÚ: 827118, IAMVO: 12345678</div>
<div class="a nw" style="left:359.5px;top:503.18px;padding:3.85px 0 0.8px 0;font-size:12.8px;font-weight:700;color:#000;line-height:14px;background:#fff">Nastavenie filtra:</div>
<div class="a nw" style="left:359.5px;top:522.95px;padding:3.85px 0 0.8px 0;font-size:13.2px;color:#000;line-height:14px;background:#fff">Podľa dátumu: áno</div>
<div class="a nw" style="left:359.5px;top:543.11px;padding:3.85px 0 0.8px 0;font-size:13.2px;color:#000;line-height:14px;background:#fff">Dátumy: 01.01.2025 - 31.12.2025</div>
<div class="a nw" style="left:359.5px;top:563.26px;padding:3.85px 0 0.8px 0;font-size:13.2px;color:#000;line-height:14px;background:#fff">Kódy nakladania:</div>
<div class="a nw" style="left:359.5px;top:583.41px;padding:3.85px 0 0.8px 0;font-size:13.2px;color:#000;line-height:14px;background:#fff">Pohyb: odovzdanie</div>
<div class="a nw" style="left:359.5px;top:603.57px;padding:3.85px 0 0.8px 0;font-size:13.2px;color:#000;line-height:14px;background:#fff">Kódy IKÚ:</div>
<div class="a nw" style="left:359.5px;top:623.72px;padding:3.85px 0 0.8px 0;font-size:13.2px;color:#000;line-height:14px;background:#fff">Kódy pre výrobok / činnosť:</div>
<div class="a nw" style="left:359.5px;top:643.88px;padding:3.85px 0 0.8px 0;font-size:13.2px;color:#000;line-height:14px;background:#fff">PNDO:</div>
<div class="a nw" style="left:359.5px;top:684.56px;padding:3.85px 0 0.8px 0;font-size:12.8px;font-weight:700;color:#000;line-height:14px;background:#fff">09 01 01&nbsp; - roztoky vodorozpustných vývojok a aktivátorov</div>
<div class="a nw" style="left:359.5px;top:704.34px;padding:3.85px 0 0.8px 0;font-size:13.2px;color:#000;line-height:14px;background:#fff">Kód činnosti: P</div>
<div class="a nw" style="left:359.5px;top:724.49px;padding:3.85px 0 0.8px 0;font-size:13.2px;color:#000;line-height:14px;background:#fff">Kategória: N</div>
<div class="a nw" style="left:359.5px;top:744.65px;padding:3.85px 0 0.8px 0;font-size:13.2px;color:#000;line-height:14px;background:#fff">Y-kód: Y16</div>
<div class="a nw" style="left:359.5px;top:788.2px;font-size:12.8px;font-weight:700;color:#000;line-height:16px">Dátum</div>
<div class="a nw" style="left:560.9px;top:788.2px;font-size:12.8px;font-weight:700;color:#000;line-height:16px">Vznik / prevzatie (t)</div>
<div class="a nw" style="left:762.2px;top:788.2px;font-size:12.8px;font-weight:700;color:#000;line-height:16px">Odovzdanie (t)</div>
<div class="a nw" style="left:963.5px;top:788.2px;font-size:12.8px;font-weight:700;color:#000;line-height:16px">Kód nakladania</div>
<div class="a nw" style="left:1164.9px;top:788.2px;font-size:12.8px;font-weight:700;color:#000;line-height:16px">Výrobok / materiál činnosť</div>
<div class="a nw" style="left:1366.2px;top:788.2px;font-size:12.8px;font-weight:700;color:#000;line-height:16px">Výrobok / materiál hmotnosť (t)</div>
<div class="a nw" style="left:1567.6px;top:788.2px;font-size:12.8px;font-weight:700;color:#000;line-height:16px">Predchádzajúci/nasledujúci drž</div>
<div class="a nw" style="left:356.5px;top:808.0px;width:198.3px;text-align:right;font-size:13.2px;color:#000;line-height:16px">03.12.2025</div>
<div class="a nw" style="left:560.9px;top:808.0px;font-size:13.2px;color:#000;line-height:16px">-</div>
<div class="a nw" style="left:759.2px;top:808.0px;width:198.3px;text-align:right;font-size:13.2px;color:#000;line-height:16px">4,5891</div>
<div class="a nw" style="left:963.5px;top:808.0px;font-size:13.2px;color:#000;line-height:16px">R4</div>
<div class="a nw" style="left:1164.9px;top:808.0px;font-size:13.2px;color:#000;line-height:16px">&nbsp;-</div>
<div class="a nw" style="left:1567.6px;top:808.0px;font-size:13.2px;color:#000;line-height:16px">66553344 - Chemická upravovň</div>
<div class="a nw" style="left:356.5px;top:828.1px;width:198.3px;text-align:right;font-size:13.2px;color:#000;line-height:16px">01.01.2025</div>
<div class="a nw" style="left:557.9px;top:828.1px;width:198.3px;text-align:right;font-size:13.2px;color:#000;line-height:16px">0,382425</div>
<div class="a nw" style="left:762.2px;top:828.1px;font-size:13.2px;color:#000;line-height:16px">-</div>
<div class="a nw" style="left:963.5px;top:828.1px;font-size:13.2px;color:#000;line-height:16px">Z</div>
<div class="a nw" style="left:1164.9px;top:828.1px;font-size:13.2px;color:#000;line-height:16px">&nbsp;-</div>
<div class="a nw" style="left:1567.6px;top:828.1px;font-size:13.2px;color:#000;line-height:16px">123456789 - DEMO VZOR, Košice</div>
<div class="a" style="left:356.5px;top:783.7px;width:1400px;height:1px;background:#000"></div>
<div class="a" style="left:356.5px;top:803.8px;width:1400px;height:1px;background:#000"></div>
<div class="a" style="left:356.5px;top:824.0px;width:1400px;height:1px;background:#000"></div>
<div class="a" style="left:356.0px;top:784.2px;width:1px;height:52.8px;background:#000"></div>
<div class="a" style="left:557.4px;top:784.2px;width:1px;height:52.8px;background:#000"></div>
<div class="a" style="left:758.7px;top:784.2px;width:1px;height:52.8px;background:#000"></div>
<div class="a" style="left:960.0px;top:784.2px;width:1px;height:52.8px;background:#000"></div>
<div class="a" style="left:1161.4px;top:784.2px;width:1px;height:52.8px;background:#000"></div>
<div class="a" style="left:1362.8px;top:784.2px;width:1px;height:52.8px;background:#000"></div>
<div class="a" style="left:1564.1px;top:784.2px;width:1px;height:52.8px;background:#000"></div>
<div class="a" style="left:1757px;top:236px;width:17px;height:601px;background:#f0f0f0"></div>
<div class="a" style="left:1760px;top:238px;width:16px;height:15px;background:#fff;border:1px solid #aaa"></div>
<div class="a" style="left:1763.5px;top:243px;width:0;height:0;border-left:4.5px solid transparent;border-right:4.5px solid transparent;border-bottom:5px solid #222"></div>
<div class="a" style="left:1760px;top:254px;width:16px;height:370px;background:#fff;border:1px solid #aaa"></div>
<div class="a" style="left:1760px;top:823px;width:16px;height:14px;background:#fff;border:1px solid #aaa"></div>
<div class="a" style="left:1763.5px;top:828px;width:0;height:0;border-left:4.5px solid transparent;border-right:4.5px solid transparent;border-top:5px solid #222"></div>
<div class="a" style="left:329px;top:837px;width:1449px;height:29px;background:#e6e6e6;border-top:1px solid #c6c6c6;border-left:1.5px solid #4a8c66"></div>
<svg class="a" style="left:357px;top:846px" width="6" height="10" viewBox="0 0 6 10"><path d="M5 0.5L0.8 5L5 9.5Z" fill="#b9b9b9"/></svg>
<svg class="a" style="left:386px;top:846px" width="6" height="10" viewBox="0 0 6 10"><path d="M1 0.5L5.2 5L1 9.5Z" fill="#b9b9b9"/></svg>
<div class="a" style="left:431.5px;top:837px;width:90px;height:26px;background:#fff;border-left:1px solid #c6c6c6;border-right:1px solid #c6c6c6;border-bottom:3px solid #217346"></div>
<div class="a nw" style="left:443px;top:843px;font-size:13px;font-weight:700;color:#217346;line-height:16px">Worksheet</div>
<svg class="a" style="left:555px;top:843px" width="17" height="17" viewBox="0 0 17 17"><circle cx="8.5" cy="8.5" r="7.5" fill="none" stroke="#c2c2c2" stroke-width="1.1"/><path d="M8.5 4.5V12.5M4.5 8.5H12.5" stroke="#c2c2c2" stroke-width="1.3"/></svg>
<div class="a" style="left:1199px;top:846px;width:2px;height:2px;background:#aaa;box-shadow:0 4px 0 #aaa,0 8px 0 #aaa"></div>
<div class="a" style="left:1217px;top:844px;width:540px;height:16px;background:#f0f0f0"></div>
<div class="a" style="left:1217px;top:844px;width:16px;height:16px;background:#fff;border:1px solid #aaa"></div>
<div class="a" style="left:1222px;top:848px;width:0;height:0;border-top:4px solid transparent;border-bottom:4px solid transparent;border-right:5px solid #222"></div>
<div class="a" style="left:1232px;top:844px;width:318px;height:16px;background:#fff;border:1px solid #aaa"></div>
<div class="a" style="left:1742px;top:844px;width:15px;height:16px;background:#fff;border:1px solid #aaa"></div>
<div class="a" style="left:1748px;top:848px;width:0;height:0;border-top:4px solid transparent;border-bottom:4px solid transparent;border-left:5px solid #222"></div>
<div class="a" style="left:329px;top:866px;width:1449px;height:22px;background:#f3f3f3;border-left:1.5px solid #4a8c66"></div>
<div class="a" style="left:329px;top:888px;width:1451px;height:1.5px;background:#4a8c66"></div>
<div class="a" style="left:329px;top:889.5px;width:1449px;height:3px;background:#bdbdbd"></div>
<div class="a nw" style="left:342px;top:871px;font-size:11px;color:#333;line-height:14px">Pripravený</div>
<svg class="a" style="left:414px;top:869px" width="16" height="16" viewBox="0 0 16 16">
<path d="M7 1.5A6 6 0 1 0 10.5 12" fill="none" stroke="#555" stroke-width="1.2" stroke-dasharray="2 1.3"/>
<path d="M7 1V7" stroke="#555" stroke-width="1.1"/><path d="M8.5 8.5L15 15M15 8.5L8.5 15" stroke="#555" stroke-width="1.5"/>
</svg>
<div class="a" style="left:1462px;top:866px;width:40px;height:22px;background:#c8c8c8"></div>
<svg class="a" style="left:1475px;top:869px" width="14" height="14" viewBox="0 0 14 14"><g fill="none" stroke="#6a6a6a" stroke-width="1.1">
<rect x="0.6" y="0.6" width="12.8" height="12.8"/><path d="M4.9 0.6V13.4M9.1 0.6V13.4M0.6 4.9H13.4M0.6 9.1H13.4"/></g></svg>
<svg class="a" style="left:1516px;top:869px" width="14" height="14" viewBox="0 0 14 14"><path d="M0.5 0.5H13.5V13.5H0.5Z M2.5 2.5H11.5V11.5H2.5Z" fill="none" stroke="#6a6a6a" stroke-width="1"/><path d="M4.5 5H9.5M4.5 7H9.5M4.5 9H9.5" stroke="#6a6a6a" stroke-width="0.9"/></svg>
<svg class="a" style="left:1556px;top:869px" width="14" height="14" viewBox="0 0 14 14"><path d="M0.5 0.5H13.5V13.5H0.5Z" fill="none" stroke="#666" stroke-width="1"/><path d="M5 0.5V7H0.5M8 0.5V7H13.5" fill="none" stroke="#666" stroke-width="1"/></svg>
<div class="a" style="left:1589px;top:876px;width:8px;height:1.3px;background:#555"></div>
<div class="a" style="left:1602px;top:876.5px;width:101px;height:1.2px;background:#555"></div>
<div class="a" style="left:1651px;top:871.5px;width:5px;height:11px;background:#444"></div>
<svg class="a" style="left:1707px;top:872px" width="10" height="10" viewBox="0 0 10 10"><path d="M5 0.5V9.5M0.5 5H9.5" stroke="#555" stroke-width="1.2"/></svg>
<div class="a nw" style="left:1729px;top:870px;font-size:11.5px;color:#333;line-height:14px">100 %</div>
<div class="a" style="left:329px;top:123px;width:1.5px;height:766px;background:#4a8c66"></div>
<div class="a" style="left:325px;top:120px;width:453px;height:776px;border:4px solid #000;border-top-width:3px;width:1453px"></div>
<!-- ANNOTATION -->
<div class="a" style="left:55px;top:298px;width:130px;height:51px;background:#ffdd00;border:1.3px solid #222;border-radius:25px"></div>
<div class="a nw" style="left:79px;top:307.6px;font-size:22.6px;font-weight:700;color:#000;line-height:26px;letter-spacing:-0.3px">Export</div>
<svg class="a" style="left:180px;top:285px" width="150" height="85" viewBox="180 285 150 85">
<path d="M187.5 363.3 L191.1 360.8 L194.8 358.3 L198.4 355.9 L202.0 353.5 L205.6 351.1 L209.1 348.8 L212.7 346.5 L216.3 344.3 L219.8 342.1 L223.4 340.0 L226.9 338.0 L230.5 336.0 L234.0 334.1 L237.6 332.2 L241.0 330.3 L244.5 328.4 L248.0 326.6 L251.5 324.9 L255.0 323.2 L258.5 321.5 L262.0 319.9 L265.4 318.4 L268.9 316.9 L272.4 315.5 L275.9 314.1 L279.4 312.8 L282.9 311.5 L286.4 310.3 L289.8 309.2 L293.3 308.1 L296.8 307.0 L300.3 306.0 L303.8 305.1 L307.3 304.2 L310.7 303.4 L314.2 302.6 L317.7 301.9 L321.2 301.2 L324.7 300.6 L324.3 298.2 L320.8 298.7 L317.2 299.3 L313.7 300.0 L310.2 300.7 L306.6 301.4 L303.1 302.2 L299.5 303.1 L296.0 304.0 L292.4 305.0 L288.9 306.1 L285.3 307.2 L281.8 308.3 L278.2 309.5 L274.7 310.8 L271.1 312.1 L267.6 313.5 L264.0 315.0 L260.4 316.5 L256.9 318.0 L253.3 319.6 L249.8 321.3 L246.2 323.0 L242.7 324.8 L239.1 326.6 L235.6 328.5 L232.0 330.6 L228.5 332.7 L225.0 334.8 L221.5 337.1 L218.1 339.3 L214.6 341.7 L211.1 344.0 L207.6 346.5 L204.1 349.0 L200.6 351.5 L197.2 354.1 L193.7 356.9 L190.3 359.7 L186.9 362.5Z" fill="#26409a"/>
<path d="M307.8 292.6 Q316 295 324.5 299.3" fill="none" stroke="#26409a" stroke-width="3.2" stroke-linecap="round"/>
<path d="M305.3 311 Q314 304.5 324.5 299.3" fill="none" stroke="#26409a" stroke-width="2.8" stroke-linecap="round"/>
</svg>

</body></html>
